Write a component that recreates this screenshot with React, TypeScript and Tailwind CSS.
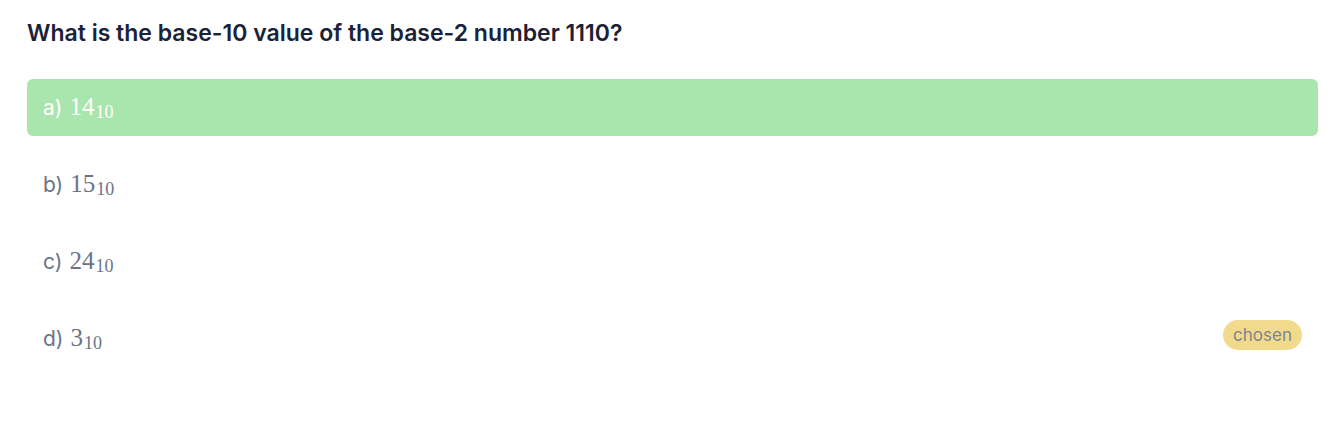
import React from "react"

const options = [
    { label: "a)", value: "14", correct: true },
    { label: "b)", value: "15" },
    { label: "c)", value: "24" },
    { label: "d)", value: "3", chosen: true },
]

function Option(props: { label: string; value: string; correct?: boolean; chosen?: boolean }) {
    return (
        <div
            className={
                props.correct
                    ? "flex h-[57px] items-center justify-between rounded-md bg-[#a9e6ae] pl-4 pr-4 text-white"
                    : "flex h-[57px] items-center justify-between rounded-md pl-4 pr-4 text-[#6a7486]"
            }
        >
            <div className="flex items-baseline">
                <span className="font-['Inter',sans-serif] text-[21px]">{props.label}</span>
                <span className="ml-[7px] font-['Liberation_Serif',serif] text-[25px]">
                    {props.value}
                    <span className="relative top-[3px] ml-[1px] text-[18px]">10</span>
                </span>
            </div>
            {props.chosen && (
                <span className="-mt-[6px] rounded-full bg-[#f1da8b] px-[10px] py-[3px] font-['Inter',sans-serif] text-[17px] leading-[24px] text-[#7d8390]">
                    chosen
                </span>
            )}
        </div>
    )
}

export default function App() {
    return (
        <div className="min-h-[421px] bg-white pl-[27px] pr-[16px] pt-[16px]">
            <h1 className="font-['Inter',sans-serif] text-[23px] font-semibold text-[#1b2238]">
                What is the base-10 value of the base-2 number 1110?
            </h1>
            <div className="mt-[28px] flex flex-col gap-[20px]">
                {options.map((o, i) => (
                    <Option key={i} {...o} />
                ))}
            </div>
        </div>
    )
}
